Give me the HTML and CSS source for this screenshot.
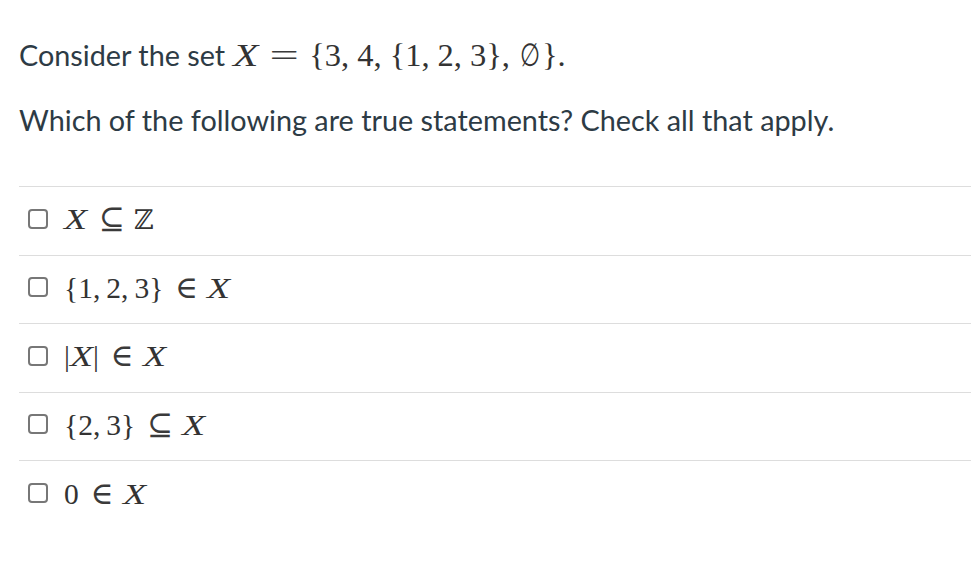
FILE: index.html
```html
<!DOCTYPE html>
<html>
<head>
<meta charset="utf-8">
<link rel="stylesheet" href="styles.css">
</head>
<body>
<div class="question">
  <p class="text">Consider the set <span class="math"><i class="x">X</i><span class="rel eq">=</span>{3,<span class="sp"></span>4,<span class="sp"></span>{1,<span class="sp"></span>2,<span class="sp"></span>3},<span class="sp"></span><span class="empty">∅</span>}.</span></p>
  <p class="text second">Which of the following are true statements? Check all that apply.</p>
  <div class="answers">
    <label class="answer"><span class="box"></span><span class="math"><i class="x">X</i><span class="rel">⊆</span><span class="bb">ℤ</span></span></label>
    <label class="answer"><span class="box"></span><span class="math">{1,<span class="sp"></span>2,<span class="sp"></span>3}<span class="rel">∈</span><i class="x">X</i></span></label>
    <label class="answer"><span class="box"></span><span class="math">|<i class="x">X</i>|<span class="rel">∈</span><i class="x">X</i></span></label>
    <label class="answer"><span class="box"></span><span class="math">{2,<span class="sp"></span>3}<span class="rel">⊆</span><i class="x">X</i></span></label>
    <label class="answer"><span class="box"></span><span class="math">0<span class="rel">∈</span><i class="x">X</i></span></label>
  </div>
</div>
</body>
</html>
```
FILE: styles.css
```css
html, body {
  margin: 0;
  padding: 0;
  background: #ffffff;
}
.question {
  padding: 35px 0 0 19px;
  font-family: Lato, "Noto Sans", sans-serif;
  font-size: 28.8px;
  color: #2d3b45;
}
.text {
  margin: 0;
  line-height: 40px;
  height: 40px;
}
.text.second {
  margin-top: 25px;
}
.answers {
  margin-top: 46px;
  border-top: 1px solid #dddddd;
}
.answer {
  display: flex;
  align-items: center;
  height: 68.5px;
  box-sizing: border-box;
  padding: 0 0 4px 9px;
  border-bottom: 1px solid #dddddd;
}
.answer:last-child {
  border-bottom: none;
}
.box {
  width: 16px;
  height: 16px;
  border: 2px solid #777777;
  border-radius: 4px;
  box-sizing: content-box;
  flex: none;
  margin-right: 16px;
}
.math {
  font-family: "Liberation Serif", "DejaVu Serif", serif;
  font-size: 29.5px;
  color: #333333;
  white-space: nowrap;
}
.text .math {
  font-size: 32.5px;
}
.x {
  font-style: italic;
  display: inline-block;
  transform: scaleX(1.28);
  transform-origin: left center;
  margin-right: 0.17em;
}
.rel {
  margin: 0 9px 0 12px;
  font-size: 1.05em;
  color: #3a3a3a;
}
.rel.eq {
  display: inline-block;
  font-size: 1em;
  transform: scaleX(1.6);
  margin: 0 16px 0 17px;
}
.sp {
  display: inline-block;
  width: 6px;
}
.text .sp {
  width: 8px;
}
.bb {
  font-family: "DejaVu Serif", serif;
  font-size: 27px;
}
.empty {
  display: inline-block;
  font-family: "DejaVu Serif", serif;
  font-size: 32px;
  transform: scaleX(0.72);
  margin: 0 -2px;
}
```
